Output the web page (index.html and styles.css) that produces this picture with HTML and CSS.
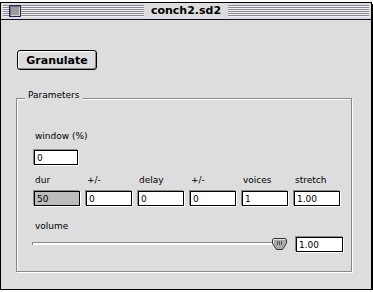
FILE: index.html
```html
<!DOCTYPE html>
<html>
<head>
<meta charset="utf-8">
<link rel="stylesheet" href="styles.css">
</head>
<body>
<div class="window">
  <div class="titlebar">
    <div class="tb-side tb-left">
      <span class="stripes short"></span>
      <span class="closebox"></span>
      <span class="stripes"></span>
    </div>
    <div class="title">conch2.sd2</div>
    <div class="tb-side tb-right">
      <span class="stripes"></span>
    </div>
  </div>
  <div class="content">
    <button class="btn">Granulate</button>
    <div class="group">
      <div class="legend">Parameters</div>
      <div class="field">
        <span class="lbl">window (%)</span>
        <input class="edit w-window" value="0" readonly>
      </div>
      <div class="row">
        <div class="field"><span class="lbl">dur</span><input class="edit w-col dim" value="50" readonly></div>
        <div class="field"><span class="lbl">+/-</span><input class="edit w-col" value="0" readonly></div>
        <div class="field"><span class="lbl">delay</span><input class="edit w-col" value="0" readonly></div>
        <div class="field"><span class="lbl">+/-</span><input class="edit w-col" value="0" readonly></div>
        <div class="field"><span class="lbl">voices</span><input class="edit w-col" value="1" readonly></div>
        <div class="field"><span class="lbl">stretch</span><input class="edit w-col" value="1.00" readonly></div>
      </div>
      <div class="field volume">
        <span class="lbl">volume</span>
        <div class="slider-row">
          <div class="slider">
            <div class="track"></div>
            <svg class="thumb" width="15" height="12" viewBox="0 0 15 12">
              <path d="M1.5 0.5 H13.5 L14.5 1.5 V5.5 L10.5 11.5 H4.5 L0.5 5.5 V1.5 Z" fill="#a9a9a9" stroke="#333"/>
              <path d="M1.5 5 V1.5 H13" fill="none" stroke="#e0e0e0"/>
              <path d="M5.5 3 V7 M7.5 3 V7 M9.5 3 V7" stroke="#555"/>
            </svg>
          </div>
          <input class="edit w-vol" value="1.00" readonly>
        </div>
      </div>
    </div>
  </div>
</div>
</body>
</html>
```

FILE: styles.css
```css
html, body {
  margin: 0;
  background: #ffffff;
}
body {
  font-family: "DejaVu Sans", Verdana, sans-serif;
  font-size: 9px;
  color: #000;
}
.window {
  margin-top: 2px;
  width: 372px;
  height: 288px;
  box-sizing: border-box;
  border: 1px solid #000;
  box-shadow: 1px 2px 0 #000;
  background: #dddddd;
  display: flex;
  flex-direction: column;
}
.titlebar {
  height: 16px;
  border-bottom: 1px solid #10102a;
  display: grid;
  grid-template-columns: 1fr auto 1fr;
  align-items: center;
  background: #dddddd;
}
.tb-side {
  display: flex;
  align-items: center;
  height: 12px;
}
.tb-left { padding-left: 2px; }
.tb-right { padding-right: 2px; }
.stripes {
  flex: 1;
  height: 12px;
  background: repeating-linear-gradient(to bottom, #8a8a94 0 1px, #f2f2f2 1px 2px);
}
.stripes.short { flex: 0 0 6px; }
.closebox {
  width: 12px;
  height: 12px;
  box-sizing: border-box;
  border: 1px solid #26265a;
  background: #9c9c9c;
  box-shadow: inset 1px 1px 0 #6e6e7e, inset -1px -1px 0 #cfcfcf;
}
.title {
  font: bold 11px/16px "DejaVu Sans", Verdana, sans-serif;
  padding: 0 7px;
  white-space: nowrap;
}
.content {
  flex: 1;
  display: flex;
  flex-direction: column;
  align-items: flex-start;
  padding: 30px 0 0 15px;
}
.btn {
  margin: 0 0 0 1px;
  width: 80px;
  height: 20px;
  box-sizing: border-box;
  border: 1px solid #000;
  border-radius: 3px;
  background: #dddddd;
  box-shadow: inset 1px 1px 0 #fff, inset -1px -1px 0 #8a8a8a;
  font: bold 11px "DejaVu Sans", Verdana, sans-serif;
  color: #000;
  padding: 0;
}
.group {
  position: relative;
  margin-top: 28px;
  width: 336px;
  box-sizing: border-box;
  border: 1px solid #888;
  box-shadow: 1px 1px 0 #fff, inset 1px 1px 0 #fff;
  padding: 32px 8px 19px 17px;
  display: flex;
  flex-direction: column;
}
.legend {
  position: absolute;
  top: -9px;
  left: 8px;
  padding: 0 3px;
  line-height: 11px;
  background: #dddddd;
}
.field {
  display: flex;
  flex-direction: column;
  align-items: flex-start;
}
.lbl {
  line-height: 11px;
  padding-left: 1px;
  white-space: nowrap;
}
.field > .lbl + .edit { margin-top: 8px; }
.row {
  display: flex;
  gap: 6px;
  margin-top: 10px;
}
.row .field > .lbl + .edit { margin-top: 5px; }
.edit {
  box-sizing: border-box;
  height: 15px;
  border: 1px solid #000;
  box-shadow: -1px -1px 0 #8a8a8a, 1px 1px 0 #fff;
  background: #fff;
  font: 9px "DejaVu Sans", Verdana, sans-serif;
  color: #000;
  padding: 0 2px;
  margin: 0;
  outline: none;
}
.w-window { width: 44px; }
.w-col { width: 46px; }
.w-vol { width: 47px; flex: 0 0 47px; }
.edit.dim { background: #bcbcbc; }
.volume { margin-top: 15px; align-items: stretch; }
.slider-row {
  display: flex;
  margin-top: 5px;
  height: 15px;
}
.slider {
  flex: 1;
  position: relative;
  margin-left: -2px;
  margin-right: 9px;
  padding-top: 5px;
  box-sizing: border-box;
  height: 15px;
}
.track {
  height: 2px;
  border-top: 1px solid #888;
  border-left: 1px solid #888;
  background: #fff;
}
.thumb {
  position: absolute;
  right: 0;
  top: 1px;
  display: block;
}
```
